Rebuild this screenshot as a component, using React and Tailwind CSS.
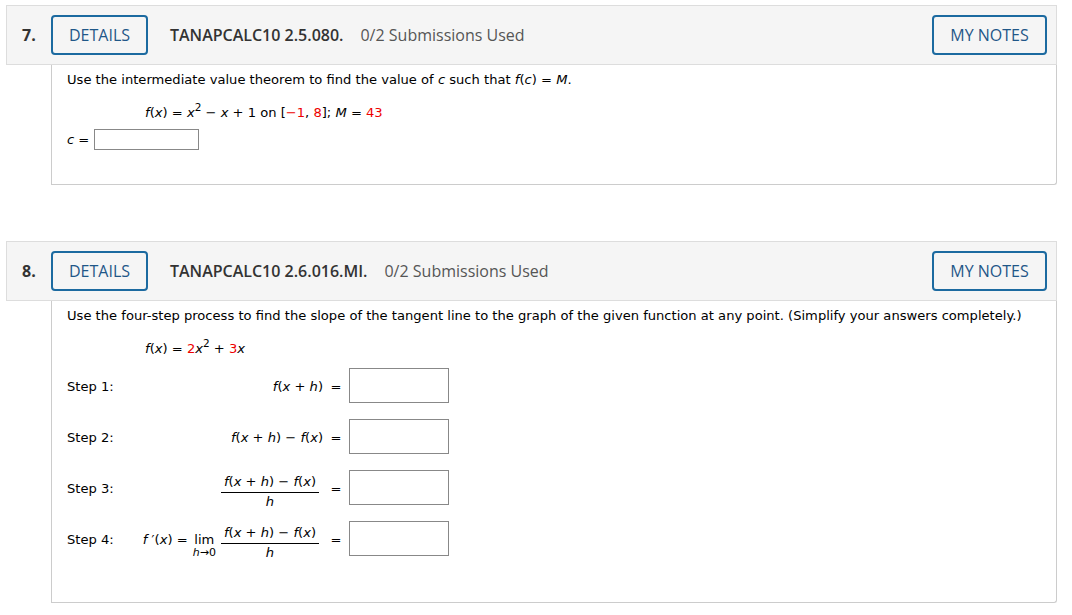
import React from 'react'

const hdrFont = { fontFamily: '"Open Sans", "Liberation Sans", sans-serif' }

function Header({ num, code }) {
  return (
    <div
      className="flex items-center h-[60px] bg-[#f5f5f5] border border-[#dddddd] pl-[15px] pr-[9px] text-[16px]"
      style={hdrFont}
    >
      <span className="w-[29px] font-bold text-[#333]">{num}</span>
      <button className="w-[97px] h-[40px] rounded-[4px] border-2 border-[#1c6aa0] text-[#1f5788] font-medium bg-transparent">
        DETAILS
      </button>
      <span className="ml-[22px] font-semibold text-[#333]">{code}</span>
      <span className="ml-[17px] text-[#555]">0/2 Submissions Used</span>
      <button className="ml-auto w-[115px] h-[40px] rounded-[4px] border-2 border-[#1c6aa0] text-[#1f5788] font-medium bg-transparent">
        MY NOTES
      </button>
    </div>
  )
}

function Body({ children, className = '' }) {
  return (
    <div
      className={`ml-[45px] border-x border-b border-[#cccccc] rounded-br-[3px] pl-[15px] text-[13.1px] text-black ${className}`}
      style={{ fontFamily: '"DejaVu Sans", Verdana, sans-serif' }}
    >
      {children}
    </div>
  )
}

const R = ({ children }) => <span className="text-[#ee0000]">{children}</span>
const I = ({ children }) => <i>{children}</i>
const Sq = () => <sup className="text-[10.5px] top-[-6px]">2</sup>

function Frac({ top, bottom }) {
  return (
    <span className="inline-flex shrink-0 flex-col items-center align-middle mt-[6px]">
      <span className="px-[3px] border-b border-black leading-[18px] pb-[1px]">{top}</span>
      <span className="leading-[18px]">{bottom}</span>
    </span>
  )
}

const fxh = (
  <span>
    <I>f</I>(<I>x</I> + <I>h</I>)
  </span>
)
const diff = (
  <span>
    <I>f</I>(<I>x</I> + <I>h</I>) − <I>f</I>(<I>x</I>)
  </span>
)

function StepRow({ label, children }) {
  return (
    <div className="flex items-center h-[35px] whitespace-nowrap">
      <span className="w-[75px] shrink-0 pt-[2px]">{label}</span>
      <span className="w-[181px] shrink-0 flex justify-end items-center pt-[2px]">{children}</span>
      <span className="w-[26px] shrink-0 text-center pt-[2px]">=</span>
      <span className="w-[100px] h-[35px] shrink-0 border border-[#888888] bg-white" />
    </div>
  )
}

export default function App() {
  return (
    <div className="bg-white w-[1072px] h-[615px] pt-[5px] pl-[6px] pr-[15px]">
      <Header num="7." code="TANAPCALC10 2.5.080." />
      <Body className="h-[120px] pt-[7px]">
        <p className="leading-[16px]">
          Use the intermediate value theorem to find the value of <I>c</I> such that <I>f</I>(<I>c</I>) = <I>M</I>.
        </p>
        <p className="leading-[16px] mt-[17px] pl-[78px]">
          <I>f</I>(<I>x</I>) = <I>x</I>
          <Sq /> − <I>x</I> + 1 on [<R>−1</R>, <R>8</R>]; <I>M</I> = <R>43</R>
        </p>
        <div className="flex items-center mt-[8px]">
          <span>
            <I>c</I> =
          </span>
          <span className="ml-[5px] w-[105px] h-[21px] border border-[#888888]" />
        </div>
      </Body>

      <div className="h-[56px]" />

      <Header num="8." code="TANAPCALC10 2.6.016.MI." />
      <Body className="h-[302px] pt-[7px]">
        <p className="leading-[16px]">
          Use the four-step process to find the slope of the tangent line to the graph of the given function at any point. (Simplify your answers completely.)
        </p>
        <p className="leading-[16px] mt-[17px] pl-[78px]">
          <I>f</I>(<I>x</I>) = <R>2</R>
          <I>x</I>
          <Sq /> + <R>3</R>
          <I>x</I>
        </p>
        <div className="mt-[11px] flex flex-col gap-[16px]">
          <StepRow label="Step 1:">{fxh}</StepRow>
          <StepRow label="Step 2:">{diff}</StepRow>
          <StepRow label="Step 3:">
            <span className="pr-[4px]">
              <Frac top={diff} bottom={<I>h</I>} />
            </span>
          </StepRow>
          <StepRow label="Step 4:">
            <span className="flex items-center pr-[4px]">
              <span className="mr-[5px] shrink-0">
                <I>f</I> ′(<I>x</I>) =
              </span>
              <span className="inline-flex shrink-0 flex-col items-center mr-[5px] mt-[12px]">
                <span className="leading-[14px]">lim</span>
                <span className="text-[11px] leading-[12px]">
                  <I>h</I>→0
                </span>
              </span>
              <Frac top={diff} bottom={<I>h</I>} />
            </span>
          </StepRow>
        </div>
      </Body>
    </div>
  )
}
